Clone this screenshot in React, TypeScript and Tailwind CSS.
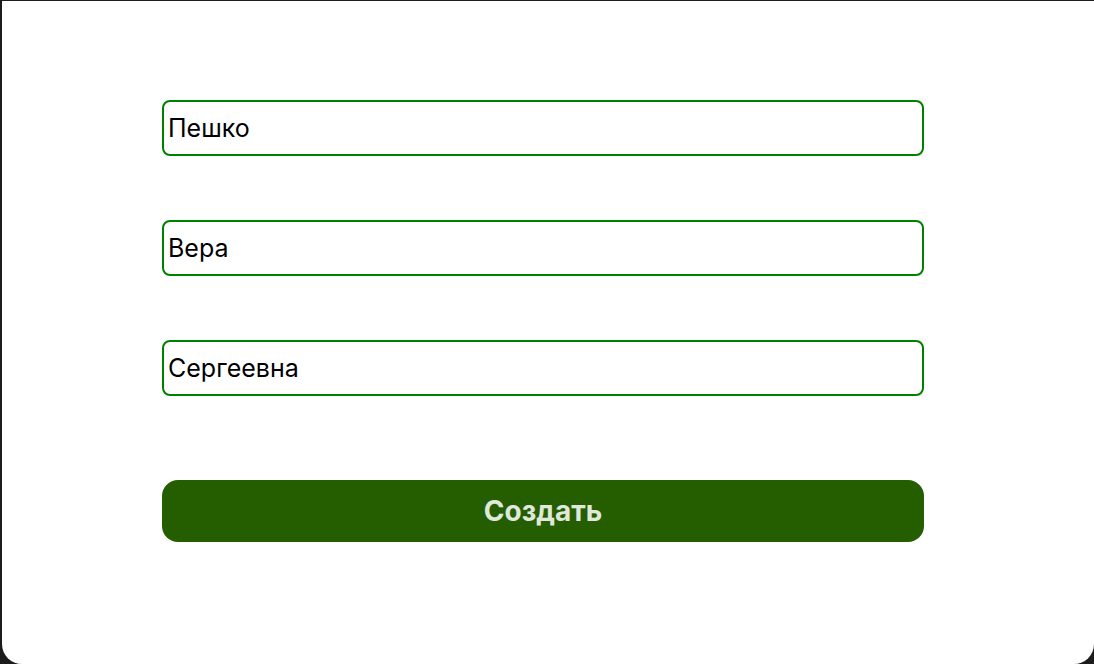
import { useEffect, useRef } from "react";

const fields = ["Пешко", "Вера", "Сергеевна"];

export default function App() {
  const lastRef = useRef<HTMLInputElement>(null);

  useEffect(() => {
    const el = lastRef.current;
    if (!el) return;
    el.focus();
    el.setSelectionRange(el.value.length, el.value.length);
  }, []);

  return (
    <div
      className="flex h-[664px] w-full flex-col bg-[#1c1c1c] pl-[2px] pt-px"
      style={{ fontFamily: 'Inter, "Liberation Sans", Arial, sans-serif' }}
    >
      <div className="flex-1 rounded-b-[20px] bg-white pl-[160px] pt-[99px]">
        <form className="flex w-[762px] flex-col" onSubmit={(e) => e.preventDefault()}>
          {fields.map((value, i) => (
            <input
              key={value}
              ref={i === fields.length - 1 ? lastRef : undefined}
              defaultValue={value}
              className="mb-[64px] h-[56px] w-full rounded-[8px] border-2 border-[#008000] bg-white px-1 text-[25px] text-black caret-black outline-none"
            />
          ))}
          <button
            type="submit"
            className="mt-5 h-[62px] w-full rounded-[16px] bg-[#255e00] text-[28px] font-bold text-[#dfe8da]"
          >
            Создать
          </button>
        </form>
      </div>
    </div>
  );
}
